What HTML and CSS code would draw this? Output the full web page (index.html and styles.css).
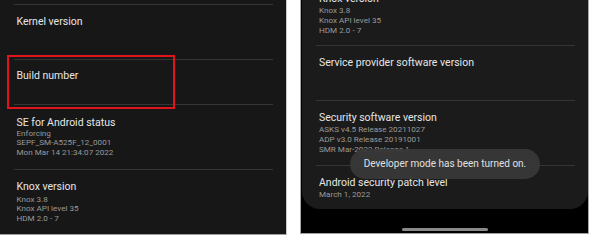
FILE: index.html
```html
<!DOCTYPE html>
<html>
<head>
<meta charset="utf-8">
<link rel="stylesheet" href="styles.css">
</head>
<body>
<div class="page">
  <section class="panel panel-left">
    <div class="row row-kernel"><div class="title">Kernel version</div></div>
    <div class="row row-build"><div class="title">Build number</div></div>
    <div class="row row-se">
      <div class="title">SE for Android status</div>
      <div class="subs">
        <div class="sub">Enforcing</div>
        <div class="sub">SEPF_SM-A525F_12_0001</div>
        <div class="sub">Mon Mar 14 21:34:07 2022</div>
      </div>
    </div>
    <div class="row row-knox">
      <div class="title">Knox version</div>
      <div class="subs subs-gap">
        <div class="sub">Knox 3.8</div>
        <div class="sub">Knox API level 35</div>
        <div class="sub">HDM 2.0 - 7</div>
      </div>
    </div>
    <div class="highlight"></div>
  </section>

  <section class="panel panel-right">
    <div class="card">
      <div class="row rrow-knox">
        <div class="title">Knox version</div>
        <div class="subs subs-gap1">
          <div class="sub">Knox 3.8</div>
          <div class="sub">Knox API level 35</div>
          <div class="sub">HDM 2.0 - 7</div>
        </div>
      </div>
      <div class="row rrow-service"><div class="title">Service provider software version</div></div>
      <div class="row rrow-security">
        <div class="title">Security software version</div>
        <div class="subs subs-gap1">
          <div class="sub">ASKS v4.5 Release 20211027</div>
          <div class="sub">ADP v3.0 Release 20191001</div>
          <div class="sub">SMR Mar-2022 Release 1</div>
        </div>
      </div>
      <div class="row rrow-patch">
        <div class="title">Android security patch level</div>
        <div class="subs subs-gap1">
          <div class="sub">March 1, 2022</div>
        </div>
      </div>
    </div>
    <div class="navbar"><div class="homebar"></div></div>
    <div class="toast">Developer mode has been turned on.</div>
  </section>
</div>
</body>
</html>
```

FILE: styles.css
```css
* { box-sizing: border-box; }
html, body { margin: 0; padding: 0; background: #ffffff; }
body { font-family: Roboto, "Noto Sans", "Liberation Sans", sans-serif; }

.page {
  display: flex;
  align-items: flex-start;
  width: 600px;
  height: 241px;
  overflow: hidden;
}

.panel {
  position: relative;
  overflow: hidden;
}

.panel-left {
  width: 287px;
  height: 235px;
  background: #171717;
  border-right: 1px solid #c8c8c8;
  border-bottom: 1px solid #a0a0a0;
  padding-top: 4px;
}

.panel-right {
  margin-left: 13px;
  width: 289px;
  height: 234px;
  background: #000000;
  border-left: 1px solid #a8a8a8;
  border-right: 1px solid #a8a8a8;
  border-bottom: 1px solid #a0a0a0;
  display: flex;
  flex-direction: column;
}

.row {
  border-top: 1px solid #353535;
  padding-left: 2.5px;
}

.panel-left .row { margin: 0 13px 0 14px; }

.title {
  font-size: 10.5px;
  line-height: 13px;
  color: #e6e6e6;
  white-space: nowrap;
}

.subs { margin-top: -0.3px; }
.subs-gap { margin-top: 1.5px; }
.subs-gap1 { margin-top: 1.4px; }

.sub {
  font-size: 8.1px;
  line-height: 9.6px;
  color: #9a9a9a;
  white-space: nowrap;
}

.row-kernel { height: 55px; padding-top: 10px; }
.row-build { height: 45px; padding-top: 9px; }
.row-se { height: 65px; padding-top: 11px; }
.row-knox { height: 65px; padding-top: 10px; }

.highlight {
  position: absolute;
  left: 7px;
  top: 55px;
  width: 168px;
  height: 54px;
  border: 2px solid #e0141c;
}

.card {
  margin: 0 0 0 1px;
  width: 286px;
  height: 209px;
  background: #1b1b1b;
  border-radius: 0 0 18px 18px;
  overflow: hidden;
  padding: 0 13px 0 14px;
}

.card .row { padding-left: 3px; }
.card .rrow-knox { border-top: none; margin-top: -8px; height: 53px; }
.rrow-service { height: 55px; padding-top: 10px; }
.rrow-security { height: 65px; padding-top: 10px; }
.rrow-patch { height: 44px; padding-top: 10px; }

.navbar {
  flex: 1;
  display: flex;
  justify-content: center;
  padding-top: 19px;
}

.homebar {
  width: 86px;
  height: 3px;
  border-radius: 2px;
  background: #8a8a8a;
}

.toast {
  position: absolute;
  top: 149px;
  left: 49px;
  width: 190px;
  height: 30px;
  border-radius: 15px;
  background: rgba(56, 56, 56, 0.97);
  color: #e0e0e0;
  font-size: 10px;
  line-height: 30px;
  text-align: center;
  white-space: nowrap;
}
```
